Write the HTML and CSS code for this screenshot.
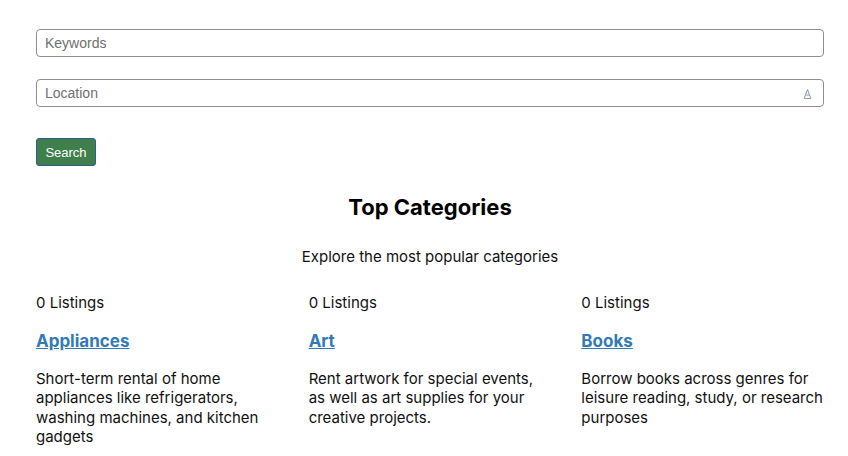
FILE: index.html
```html
<!DOCTYPE html>
<html>
<head>
<meta charset="utf-8">
<link rel="stylesheet" href="styles.css">
</head>
<body>
<div class="page">
  <form class="search">
    <input class="field" type="text" placeholder="Keywords">
    <div class="field-wrap">
      <input class="field" type="text" placeholder="Location">
      <svg class="loc-icon" width="9" height="12" viewBox="0 0 9 12"><path d="M4.5 1.5 L1.2 10.5 H7.8 Z M2.6 7 H6.4" fill="none" stroke="#8e9ab0" stroke-width="1" stroke-linejoin="round"/></svg>
    </div>
    <div><button class="btn" type="button">Search</button></div>
  </form>
  <section class="top">
    <h2 class="title">Top Categories</h2>
    <p class="subtitle">Explore the most popular categories</p>
    <div class="grid">
      <div class="cat">
        <div class="count">0 Listings</div>
        <a class="cat-link" href="#">Appliances</a>
        <p class="desc">Short-term rental of home appliances like refrigerators, washing machines, and kitchen gadgets</p>
      </div>
      <div class="cat">
        <div class="count">0 Listings</div>
        <a class="cat-link" href="#">Art</a>
        <p class="desc">Rent artwork for special events, as well as art supplies for your creative projects.</p>
      </div>
      <div class="cat">
        <div class="count">0 Listings</div>
        <a class="cat-link" href="#">Books</a>
        <p class="desc">Borrow books across genres for leisure reading, study, or research purposes</p>
      </div>
    </div>
  </section>
</div>
</body>
</html>
```
FILE: styles.css
```css
html, body { margin: 0; padding: 0; background: #fff; }
body { font-family: Inter, "Noto Sans", sans-serif; color: #111; }
.page { padding: 29px 24px 0 36px; }
.search { display: flex; flex-direction: column; gap: 22px; }
.field {
  box-sizing: border-box;
  width: 100%;
  height: 28px;
  border: 1px solid #8f8f8f;
  border-radius: 4px;
  padding: 0 8px;
  font-family: "Liberation Sans", Arial, sans-serif;
  font-size: 14px;
  color: #333;
  background: #fff;
  display: block;
}
.field::placeholder { color: #6f6f6f; }
.field-wrap { position: relative; }
.loc-icon { position: absolute; right: 12px; top: 9px; }
.btn {
  margin-top: 9px;
  height: 28px;
  width: 60px;
  box-sizing: border-box;
  background: #3f7f4c;
  color: #fff;
  border: 1px solid #2a6096;
  border-radius: 3px;
  font-family: "Liberation Sans", Arial, sans-serif;
  font-size: 13px;
  padding: 0;
}
.top { text-align: center; }
.title { margin: 26px 0 0; font-size: 22px; font-weight: 700; line-height: 30px; color: #000; }
.subtitle { margin: 25px 0 0; font-size: 15px; line-height: 20px; }
.grid {
  display: grid;
  grid-template-columns: repeat(3, 1fr);
  column-gap: 30px;
  text-align: left;
  margin-top: 26px;
}
.count { font-size: 15px; line-height: 20px; }
.cat-link {
  display: inline-block;
  margin-top: 16px;
  font-size: 17px;
  font-weight: 700;
  line-height: 24px;
  color: #337ab7;
  text-decoration: underline;
}
.desc { margin: 16px 0 0; font-size: 15px; line-height: 19.3px; }
```
